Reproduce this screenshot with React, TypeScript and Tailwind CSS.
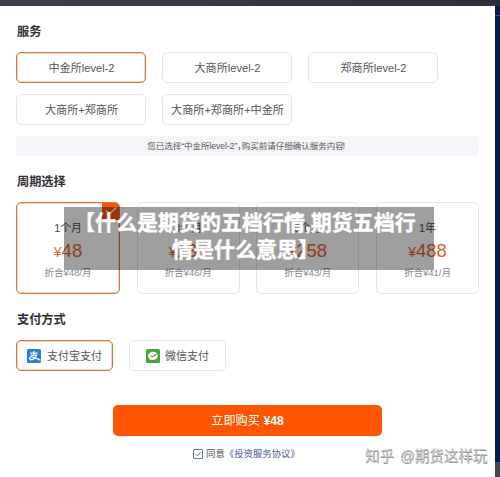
const services = ['中金所level-2', '大商所level-2', '郑商所level-2', '大商所+郑商所', '大商所+郑商所+中金所'];

const plans = [
  { name: '1个月', price: '48', monthly: '48' },
  { name: '3个月', price: '138', monthly: '46' },
  { name: '6个月', price: '258', monthly: '43' },
  { name: '1年', price: '488', monthly: '41' },
];

function Heading({ children }: { children: string }) {
  return <h2 className="h-4 pl-px text-[12.2px] leading-4 font-bold text-[#303034]">{children}</h2>;
}

function AlipayIcon() {
  return (
    <svg className="size-3.5" viewBox="0 0 14 14" fill="none">
      <rect width="14" height="14" rx="1.6" fill="#2c7be5" />
      <path
        d="M3.2 4.1h7.4M6.8 2v4.100M3.8 6.1h5.7C9 8.4 6.7 10.700 4.4 10.700c-1.7 0-2.100-1-1.600-1.800.7-1.200 2.900-1 4.700-.2l6 2.500"
        stroke="white"
        strokeWidth="1.3"
      />
    </svg>
  );
}

function WechatIcon() {
  return (
    <svg className="size-3.5" viewBox="0 0 14 14" fill="none">
      <rect width="14" height="14" rx="1.6" fill="#45a53d" />
      <path
        d="M7 2.7c-2.8 0-4.9 1.8-4.9 4.1 0 1.3.7 2.4 1.8 3.2l-.3 1.5 1.7-.9c.5.2 1.1.3 1.7.3 2.8 0 4.9-1.8 4.9-4.1S9.8 2.7 7 2.7Z"
        fill="white"
      />
      <path d="m4.6 6.6 1.5 1.3 4.5-2.7" stroke="#45a53d" strokeWidth="1.1" />
    </svg>
  );
}

export default function App() {
  return (
    <div className="relative flex h-[477px] w-[500px] flex-col overflow-hidden bg-white font-['Liberation_Sans','Noto_Sans_CJK_SC',sans-serif] text-[#555]">
      <div className="flex h-full">
        <main className="flex w-[495px] flex-col">
          <div className="h-1.5 shrink-0 bg-linear-to-r from-[#403e4d] to-[#302e36]" />
          <div className="flex flex-col pt-[18px] pr-4 pl-4">
            <Heading>服务</Heading>
            <div className="mt-3 grid grid-cols-[130px_130px_130px] gap-x-4 gap-y-[11px]">
              {services.map((name, i) => (
                <div
                  key={name}
                  className={`flex h-[31px] items-center justify-center rounded-[5px] border pt-px pl-px text-[11.1px] whitespace-nowrap ${
                    i === 0 ? 'border-[#d97442] ring-[0.5px] ring-[#d97442]/60 ring-inset' : 'border-[#e6e6e6]'
                  }`}
                >
                  {name}
                </div>
              ))}
            </div>
            <div className="mt-[11px] flex h-5 w-[463px] items-center justify-center rounded bg-[#f5f5fa] pt-px text-[8.5px] text-[#555]">
              <span>您已选择“中金所level-2”</span>
              <span className="-mr-1">，</span>
              <span>购买前请仔细确认服务内容</span>
              <span className="-ml-0.5 w-1.5">！</span>
            </div>
            <div className="mt-[18px]">
              <Heading>周期选择</Heading>
            </div>
            <div className="mt-3 grid w-[463px] grid-cols-[104px_103px_103px_103px] justify-between">
              {plans.map((plan, i) => (
                <div
                  key={plan.name}
                  className={`relative flex h-[92px] flex-col items-center overflow-hidden rounded-[5px] border pt-4 ${
                    i === 0 ? 'border-[#d97442] ring-[0.5px] ring-[#d97442]/60 ring-inset' : 'border-[#e6e6e6]'
                  }`}
                >
                  {i === 0 && (
                    <div className="absolute -top-px -right-px flex h-[18px] w-[18px] items-center justify-center bg-[#f75400]">
                      <svg className="h-3 w-3" viewBox="0 0 12 12" fill="none">
                        <path d="m1 5.500 3.500 3.500L11.500 2.500" stroke="white" strokeWidth="1.5" />
                      </svg>
                    </div>
                  )}
                  <div className="h-[18px] text-[10.8px] leading-[18px] text-[#484848]">{plan.name}</div>
                  <div className="mt-[2px] h-6 text-[18.5px] leading-6 text-[#e4632b]">
                    <span className="text-[14px]">¥</span>
                    {plan.price}
                  </div>
                  <div className="mt-[2px] h-4 text-[9.5px] leading-4 text-[#888891]">折合¥{plan.monthly}/月</div>
                </div>
              ))}
            </div>
            <div className="mt-[18px]">
              <Heading>支付方式</Heading>
            </div>
            <div className="mt-3 flex gap-4">
              <div className="flex h-[31px] w-[97px] items-center gap-1.5 rounded-[5px] border border-[#d97442] pl-2.5 text-[11px] ring-[0.5px] ring-[#d97442]/60 ring-inset">
                <AlipayIcon />
                <span className="pt-px">支付宝支付</span>
              </div>
              <div className="flex h-[31px] w-[97px] items-center gap-[5px] rounded-[5px] border border-[#e6e6e6] pl-4 text-[11px]">
                <WechatIcon />
                <span className="pt-px">微信支付</span>
              </div>
            </div>
          </div>
          <button className="mt-[34px] ml-[113px] h-[31px] w-[269px] rounded-[5px] bg-[#ff5500] pt-px text-[12.2px] text-white">
            立即购买 <span className="font-bold">¥48</span>
          </button>
          <div className="mt-2.5 flex h-4 items-center pl-[193px] text-[9.4px] whitespace-nowrap">
            <svg className="mr-[3px] size-2.5" viewBox="0 0 10 10" fill="none">
              <rect x=".5" y=".5" width="9" height="9" rx=".5" stroke="#6274b5" />
              <path d="m2.3 4.8 2 2 3.5-3.6" stroke="#6274b5" />
            </svg>
            <span>同意</span>
            <span className="text-[#4d5d9c]">《投资服务协议》</span>
          </div>
        </main>
        <aside className="flex flex-1 flex-col bg-[#001d50]">
          <div className="h-1.5 bg-[#292d3b]" />
          <div className="mt-[9px] h-px bg-[#47505d]" />
          <div className="mt-auto h-[15px] bg-[#46484b]" />
        </aside>
      </div>
      <div className="absolute top-[207px] left-16 h-[63px] w-[370px] bg-black/38 pt-[3px] pl-[10px] text-[21px] leading-[26.5px] font-bold whitespace-nowrap text-white [-webkit-text-stroke:0.4px_white]">
        <div>【什么是期货的五档行情,期货五档行</div>
        <div className="pl-[98px]">情是什么意思】</div>
      </div>
      <div className="absolute top-[446px] left-[365px] flex h-5 items-center gap-1.5 text-[14.5px] leading-5 whitespace-nowrap text-[#c4c4c4] [text-shadow:0.5px_0.5px_0_#999]">
        <span>知乎</span>
        <span>@期货这样玩</span>
      </div>
    </div>
  );
}
